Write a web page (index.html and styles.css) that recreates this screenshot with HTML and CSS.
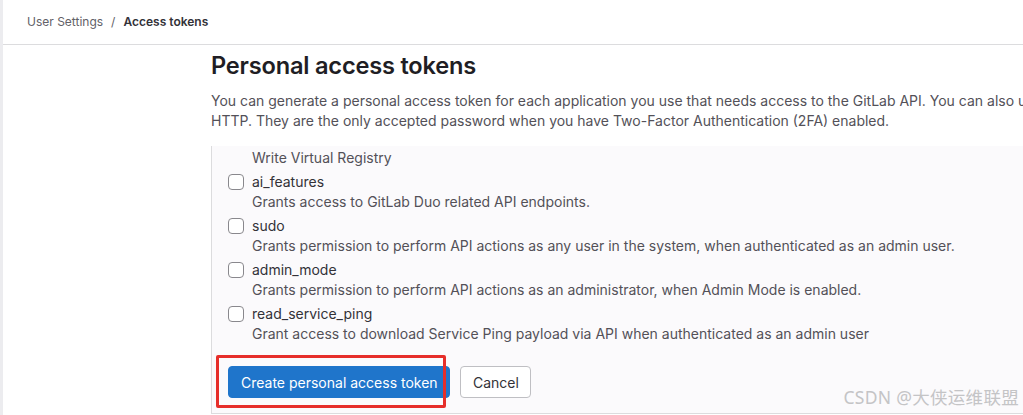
FILE: index.html
```html
<!DOCTYPE html>
<html>
<head>
<meta charset="utf-8">
<link rel="stylesheet" href="styles.css">
</head>
<body>
<div class="app">
  <header class="topbar">
    <nav class="breadcrumb">
      <span class="crumb">User Settings</span>
      <span class="sep">/</span>
      <span class="crumb current">Access tokens</span>
    </nav>
  </header>
  <main class="content">
    <h1 class="title">Personal access tokens</h1>
    <p class="lead">You can generate a personal access token for each application you use that needs access to the GitLab API. You can also use personal access tokens to authenticate against Git over<br>HTTP. They are the only accepted password when you have Two-Factor Authentication (2FA) enabled.</p>
    <section class="panel">
      <div class="scope-tail">Write Virtual Registry</div>
      <div class="scope">
        <label class="scope-label"><span class="check"></span>ai_features</label>
        <div class="scope-desc">Grants access to GitLab Duo related API endpoints.</div>
      </div>
      <div class="scope">
        <label class="scope-label"><span class="check"></span>sudo</label>
        <div class="scope-desc">Grants permission to perform API actions as any user in the system, when authenticated as an admin user.</div>
      </div>
      <div class="scope">
        <label class="scope-label"><span class="check"></span>admin_mode</label>
        <div class="scope-desc">Grants permission to perform API actions as an administrator, when Admin Mode is enabled.</div>
      </div>
      <div class="scope">
        <label class="scope-label"><span class="check"></span>read_service_ping</label>
        <div class="scope-desc">Grant access to download Service Ping payload via API when authenticated as an admin user</div>
      </div>
      <div class="actions">
        <button class="btn btn-primary">Create personal access token</button>
        <button class="btn btn-default">Cancel</button>
        <div class="highlight"></div>
      </div>
    </section>
  </main>
  <div class="watermark">CSDN @大侠运维联盟</div>
</div>
</body>
</html>
```
FILE: styles.css
```css
* { box-sizing: border-box; }
html, body { margin: 0; padding: 0; }
body {
  font-family: Inter, "Noto Sans", "Noto Sans CJK SC", sans-serif;
  background: #fff;
  color: #333238;
  width: 1023px;
  height: 415px;
  overflow: hidden;
}
.app {
  position: relative;
  height: 415px;
  overflow: hidden;
  border-left: 3px solid #ececef;
}
.topbar {
  height: 45px;
  border-bottom: 1px solid #dcdcde;
  display: flex;
  align-items: center;
  padding-left: 24px;
  padding-bottom: 1px;
}
.breadcrumb {
  font-size: 12px;
  display: flex;
  gap: 8px;
  color: #626168;
}
.breadcrumb .current { color: #333238; font-weight: 600; }
.content {
  padding-left: 208px;
  white-space: nowrap;
}
.title {
  margin: 6px 0 0;
  font-size: 23.6px;
  font-weight: 600;
  line-height: 30px;
  color: #1f1e24;
  letter-spacing: -0.2px;
}
.lead {
  margin: 10px 0 0;
  font-size: 14px;
  line-height: 20px;
  color: #535158;
}
.panel {
  margin-top: 15px;
  border-left: 1px solid #dcdcde;
  border-bottom: 1px solid #dcdcde;
  background: #fbfafc;
  padding: 2px 0 0 16px;
  height: 268px;
}
.scope-tail {
  padding-left: 24px;
  font-size: 14px;
  line-height: 20px;
  color: #535158;
}
.scope { margin-top: 4px; }
.scope-label {
  display: flex;
  align-items: center;
  gap: 8px;
  font-size: 14px;
  line-height: 20px;
  color: #333238;
}
.check {
  width: 16px;
  height: 16px;
  border: 1px solid #89888d;
  border-radius: 4px;
  background: #fff;
  flex: none;
}
.scope-desc {
  padding-left: 24px;
  font-size: 14px;
  line-height: 20px;
  color: #535158;
}
.actions {
  position: relative;
  display: flex;
  gap: 10px;
  margin-top: 22px;
}
.btn {
  font-family: inherit;
  font-size: 14px;
  height: 32px;
  border-radius: 4px;
  padding: 0 12px;
  cursor: pointer;
}
.btn-primary {
  background: #1f75cb;
  color: #fff;
  border: 1px solid #1f75cb;
  width: 222px;
}
.btn-default {
  background: #fff;
  color: #333238;
  border: 1px solid #bfbfc3;
  width: 71px;
}
.highlight {
  position: absolute;
  left: -12px;
  top: -11px;
  width: 230px;
  height: 53px;
  border: 3px solid #e62e2a;
  border-radius: 2px;
  pointer-events: none;
}
.watermark {
  position: absolute;
  right: 4px;
  bottom: 6px;
  font-size: 17.5px;
  color: #c4c4c6;
  font-family: "Noto Sans", "Noto Sans CJK SC", sans-serif;
  letter-spacing: 0.3px;
}
```
